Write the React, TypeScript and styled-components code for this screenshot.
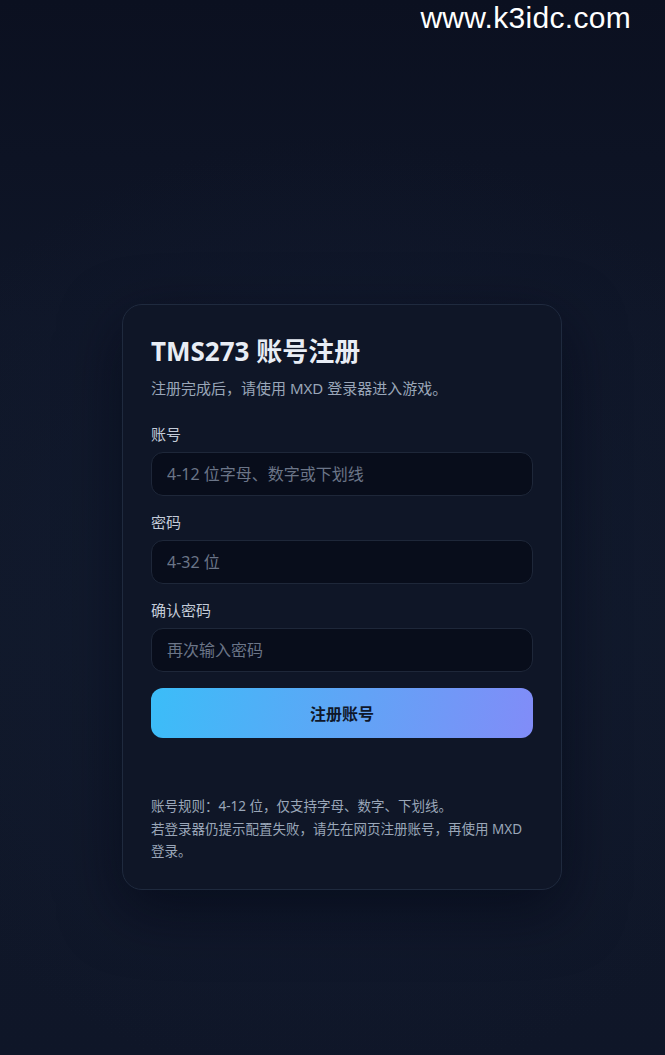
import styled, { createGlobalStyle } from "styled-components";

const GlobalStyle = createGlobalStyle`
  html, body {
    margin: 0;
    padding: 0;
    background: #0e1526;
  }
  * {
    box-sizing: border-box;
  }
  body {
    font-family: "Noto Sans", "Noto Sans CJK SC", sans-serif;
  }
`;

const fields = [
  { label: "账号", placeholder: "4-12 位字母、数字或下划线", type: "text" },
  { label: "密码", placeholder: "4-32 位", type: "password" },
  { label: "确认密码", placeholder: "再次输入密码", type: "password" },
];

export default function App() {
  return (
    <>
      <GlobalStyle />
      <Page>
        <Watermark>www.k3idc.com</Watermark>
        <Card>
          <Title>TMS273 账号注册</Title>
          <Subtitle>注册完成后，请使用 MXD 登录器进入游戏。</Subtitle>
          <Form onSubmit={(e) => e.preventDefault()}>
            {fields.map((f) => (
              <Field key={f.label}>
                <Label>{f.label}</Label>
                <Input type={f.type} placeholder={f.placeholder} />
              </Field>
            ))}
            <SubmitButton type="submit">注册账号</SubmitButton>
          </Form>
          <Notes>
            <p>账号规则：4-12 位，仅支持字母、数字、下划线。</p>
            <p>若登录器仍提示配置失败，请先在网页注册账号，再使用 MXD 登录。</p>
          </Notes>
        </Card>
      </Page>
    </>
  );
}

const Page = styled.div`
  position: relative;
  min-height: 1055px;
  display: flex;
  justify-content: center;
  align-items: flex-start;
  padding: 304px 0 0 19px;
  background:
    radial-gradient(ellipse 75% 45% at 50% 58%, #121b30 0%, rgba(18, 27, 48, 0) 100%),
    linear-gradient(180deg, #0b1020 0%, #0f1628 30%, #101829 60%, #0f1628 100%);
`;

const Watermark = styled.div`
  /* watermark over the page */
  position: absolute;
  top: 1px;
  right: 34px;
  font-family: "Liberation Sans", Arial, sans-serif;
  font-size: 30px;
  color: #ffffff;
  letter-spacing: 0.3px;
`;

const Card = styled.div`
  width: 440px;
  padding: 30px 28px 26px;
  border: 1px solid #1f2a3e;
  border-radius: 20px;
  background: #0f1627;
  box-shadow: 0 20px 60px rgba(2, 6, 18, 0.55);
`;

const Title = styled.h1`
  margin: 0;
  font-size: 26px;
  line-height: 32px;
  font-weight: 700;
  color: #e8edf5;
`;

const Subtitle = styled.p`
  margin: 10px 0 0;
  font-size: 15px;
  line-height: 22px;
  color: #9aa6b8;
`;

const Form = styled.form`
  display: flex;
  flex-direction: column;
  gap: 16px;
  margin-top: 25px;
`;

const Field = styled.div`
  display: flex;
  flex-direction: column;
  gap: 8px;
`;

const Label = styled.label`
  font-size: 15px;
  line-height: 20px;
  color: #c3cbd8;
`;

const Input = styled.input`
  height: 44px;
  padding: 0 15px;
  border: 1px solid #1e2739;
  border-radius: 12px;
  background: #080d1b;
  color: #e2e8f0;
  font-family: inherit;
  font-size: 16px;
  outline: none;

  &::placeholder {
    color: #6b7588;
  }
`;

const SubmitButton = styled.button`
  height: 50px;
  border: none;
  border-radius: 12px;
  background: linear-gradient(100deg, #3bbdf8 0%, #62a3f6 55%, #818cf8 100%);
  color: #0f172a;
  font-family: inherit;
  font-size: 16px;
  font-weight: 700;
  cursor: pointer;
`;

const Notes = styled.div`
  margin-top: 57px;
  font-size: 13.5px;
  line-height: 22.5px;
  color: #9aa6b8;
  word-break: keep-all;

  p {
    margin: 0;
  }
`;
